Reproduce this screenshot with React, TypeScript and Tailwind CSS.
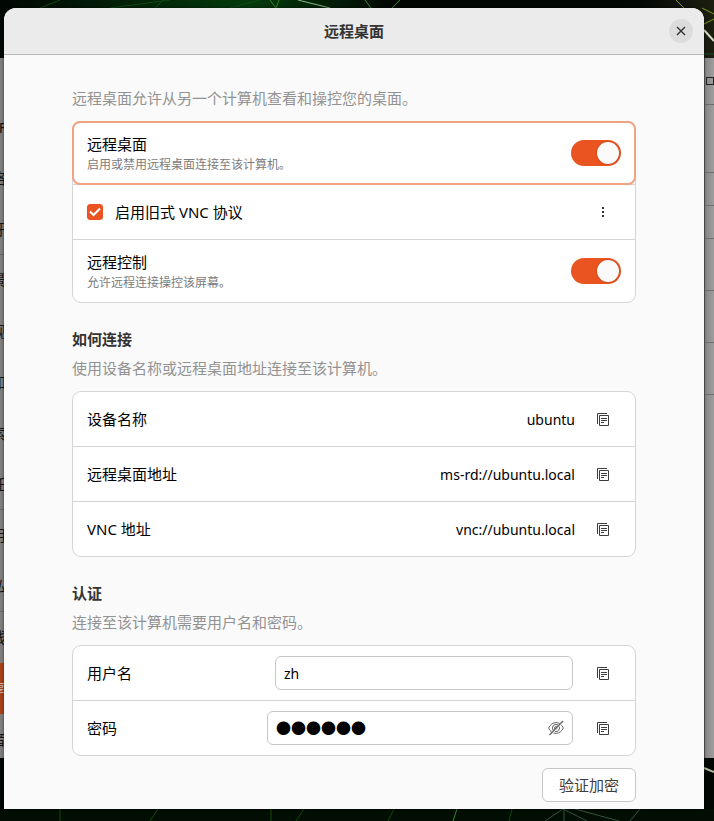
import { useState } from "react";
import type { ReactNode } from "react";

const sidebarItems = [
  { label: "Wi-Fi" },
  { label: "网络" },
  { label: "蓝牙", divider: true },
  { label: "背景" },
  { label: "外观" },
  { label: "通知" },
  { label: "搜索" },
  { label: "多任务", divider: true },
  { label: "应用程序" },
  { label: "隐私", divider: true },
  { label: "在线账户" },
  { label: "共享", active: true },
  { label: "声音" },
];

const panelRows = ["h-[68px]", "h-[33px]", "h-[33px]", "h-[52px]", "h-[52px]", "h-[52px]"];

function Wallpaper() {
  return (
    <svg
      className="absolute inset-0 h-full w-full"
      viewBox="0 0 714 821"
      preserveAspectRatio="none"
      aria-hidden="true"
    >
      <defs>
        <linearGradient id="glow" x1="0" x2="1" y1="0" y2="0">
          <stop offset="0" stopColor="#010702" />
          <stop offset="0.35" stopColor="#033a0c" />
          <stop offset="0.55" stopColor="#010702" />
          <stop offset="0.9" stopColor="#020803" />
          <stop offset="1" stopColor="#1c1e10" />
        </linearGradient>
      </defs>
      <rect width="714" height="821" fill="#010702" />
      <rect width="714" height="60" fill="url(#glow)" />
      <rect y="809" width="714" height="12" fill="#020d03" />
      <g fill="none" strokeWidth="1">
        <path d="M40 8 60 0M110 8l60-8M155 8l8-8M230 8l30-8" stroke="#0d4a14" />
        <path d="M270 0l6 8 3-8M365 0l6 8M392 8l8-8" stroke="#2f8a2b" />
        <path d="M298 0l32 8" stroke="#88b788" />
        <path d="M676 0l8 8M704 24l10-5M702 8l12 6" stroke="#7a9a22" />
        <path d="M704 30l10 11" stroke="#d5dcc4" strokeWidth="2" />
        <path d="M704 54h10" stroke="#1d4a2a" />
        <path d="M704 768l10 4" stroke="#a9b79c" strokeWidth="2" />
        <path d="M60 809v12M150 821l8-12M271 809v12M296 821l8-12M394 809l-6 12M512 809l-3 12" stroke="#104a0c" />
        <path d="M457 809l-4 12" stroke="#2c8a18" />
        <path d="M545 821l18-12 24 12M564 809v12M575 809l44 12M630 821l10-12" stroke="#33553a" />
      </g>
    </svg>
  );
}

function SettingsWindow() {
  return (
    <div className="absolute inset-x-0 top-[58px] bottom-[63px] flex justify-between overflow-hidden bg-[#8f8f8f]">
      <ul className="w-1 overflow-hidden bg-[#807e7c] pt-11 text-[15px] text-[#151515]">
        {sidebarItems.map((item) => (
          <li
            key={item.label}
            className={`flex h-[51px] items-center whitespace-nowrap ${
              item.active ? "bg-[#a84018] text-[#c9b3a9]" : ""
            } ${item.divider ? "border-b border-[#6b6967]" : ""}`}
          >
            <span className="-ml-6">{item.label}</span>
          </li>
        ))}
      </ul>
      <div className="w-[10px] border-l border-[#5a5a5a] bg-gradient-to-r from-[#868686] to-[#9e9e9e]">
        <div className="flex h-[47px] items-center justify-end border-b border-[#6c6c6c]">
          <span className="block size-2 border border-[#222]" />
        </div>
        {panelRows.map((height, i) => (
          <div key={i} className={`border-b border-[#707070] ${height}`} />
        ))}
      </div>
    </div>
  );
}

function CopyIcon() {
  return (
    <svg width="16" height="16" viewBox="0 0 16 16" fill="none" stroke="#3d3d3d" aria-hidden="true">
      <path d="M2.5 13V2.5H12M4.5 4.5h9v10h-9zM6 7.5h6M6 9.5h6M6 11.5h3" />
    </svg>
  );
}

function EyeOffIcon() {
  return (
    <svg width="16" height="16" viewBox="0 0 16 16" fill="none" stroke="#666" aria-hidden="true">
      <path d="M.6 8C2.2 4.6 4.8 2.6 8 2.6S13.8 4.6 15.4 8C13.8 11.400 11.200 13.400 8 13.400S2.200 11.400.6 8z" />
      <circle cx="8" cy="8" r="3.6" />
      <circle cx="8" cy="8" r="1.4" />
      <path d="M2 15.500 15.500 1.500" stroke="#fff" strokeWidth="1.200" />
      <path d="M1.500 15 15 1" strokeWidth="1.300" />
    </svg>
  );
}

function CopyButton({ label }: { label: string }) {
  return (
    <button type="button" aria-label={label} className="flex h-[34px] w-9 shrink-0 items-center justify-center">
      <CopyIcon />
    </button>
  );
}

function Card({ children }: { children: ReactNode }) {
  return (
    <div className="mt-[11px] divide-y divide-[#d5d5d5] rounded-[9px] border border-[#d5d5d5] bg-white">
      {children}
    </div>
  );
}

function SwitchRow({ id, title, text, focused }: { id: string; title: string; text: string; focused?: boolean }) {
  return (
    <div className="h-[63px] last:h-[62px]">
      <div
        className={`flex h-[62px] items-center justify-between px-[14px] ${
          focused ? "rounded-[7px] outline-2 -outline-offset-1 outline-[#f2a183]" : ""
        }`}
      >
        <label htmlFor={id} className="flex flex-col pt-0.5">
          <span className="text-[15px] leading-[22px] text-black">{title}</span>
          <span className="text-[12px] leading-5 text-[#7c7c7c]">{text}</span>
        </label>
        <input
          id={id}
          type="checkbox"
          role="switch"
          defaultChecked
          className="flex h-[26px] w-[50px] appearance-none items-center rounded-full bg-[#c8c8c8] px-0.5 before:size-[22px] before:rounded-full before:bg-[#fafafa] before:shadow-[0_0_2px_#b03a10] checked:justify-end checked:bg-[#e95420]"
        />
      </div>
    </div>
  );
}

function AddressRow({ label, value }: { label: string; value: string }) {
  return (
    <div className="flex h-[55px] items-center gap-[10px] px-[14px] text-black last:h-[54px]">
      <span className="flex-1 text-[15px]">{label}</span>
      <span className="text-[14px]">{value}</span>
      <CopyButton label={`复制${label}`} />
    </div>
  );
}

function Heading({ title, text }: { title: string; text: string }) {
  return (
    <div className="mt-6 flex flex-col gap-[5px]">
      <h2 className="text-[15px] leading-6 font-bold text-[#333]">{title}</h2>
      <p className="text-[15px] leading-6 text-[#929292]">{text}</p>
    </div>
  );
}

export default function App() {
  const [name, setName] = useState("zh");

  return (
    <div className="relative min-h-screen overflow-hidden bg-black pt-2 pr-[10px] pb-3 pl-1 font-['Noto_Sans','Noto_Sans_CJK_SC',sans-serif]">
      <Wallpaper />
      <SettingsWindow />
      <main className="relative rounded-t-xl bg-[#fafafa] pb-[7px] shadow-[0_0_3px_rgba(0,0,0,0.6)]">
        <header className="grid h-[47px] grid-cols-[1fr_auto_1fr] items-center rounded-t-xl border-b border-[#b8b8b8] bg-[#ebebeb] px-[11px]">
          <h1 className="col-start-2 text-[15px] font-bold text-[#333]">远程桌面</h1>
          <button
            type="button"
            aria-label="关闭"
            className="flex size-6 items-center justify-center justify-self-end rounded-full bg-[#dcdcdc]"
          >
            <svg width="10" height="10" viewBox="0 0 10 10" fill="none" stroke="#333" strokeWidth="1.400" aria-hidden="true">
              <path d="M1 1l8 8M9 1 1 9" />
            </svg>
          </button>
        </header>

        <div className="px-[68px] pt-[31px]">
          <p className="text-[15px] leading-6 text-[#929292]">远程桌面允许从另一个计算机查看和操控您的桌面。</p>
          <Card>
            <SwitchRow id="remote-desktop" title="远程桌面" text="启用或禁用远程桌面连接至该计算机。" focused />
            <div className="flex h-[55px] items-center justify-between px-[14px]">
              <label className="flex items-center gap-3 text-[15px] text-black">
                <span className="grid size-4">
                  <input
                    type="checkbox"
                    defaultChecked
                    className="peer col-start-1 row-start-1 size-4 appearance-none rounded-[3px] border border-[#c0c0c0] checked:border-[#e95420] checked:bg-[#e95420]"
                  />
                  <svg
                    className="pointer-events-none invisible col-start-1 row-start-1 peer-checked:visible"
                    width="16"
                    height="16"
                    viewBox="0 0 16 16"
                    fill="none"
                    stroke="#fff"
                    strokeWidth="2"
                    aria-hidden="true"
                  >
                    <path d="M3 7.500 6.500 11 13 4.500" />
                  </svg>
                </span>
                启用旧式 VNC 协议
              </label>
              <button type="button" aria-label="更多选项" className="flex h-[34px] w-9 items-center justify-center">
                <svg width="16" height="16" viewBox="0 0 16 16" fill="#333" aria-hidden="true">
                  <path d="M7 3h2v2H7zM7 7h2v2H7zM7 11h2v2H7z" />
                </svg>
              </button>
            </div>
            <SwitchRow id="remote-control" title="远程控制" text="允许远程连接操控该屏幕。" />
          </Card>

          <Heading title="如何连接" text="使用设备名称或远程桌面地址连接至该计算机。" />
          <Card>
            <AddressRow label="设备名称" value="ubuntu" />
            <AddressRow label="远程桌面地址" value="ms-rd://ubuntu.local" />
            <AddressRow label="VNC 地址" value="vnc://ubuntu.local" />
          </Card>

          <Heading title="认证" text="连接至该计算机需要用户名和密码。" />
          <Card>
            <div className="flex h-[55px] items-center gap-3 px-[14px] text-[15px] text-black">
              <label htmlFor="user" className="w-44 shrink-0">
                用户名
              </label>
              <input
                id="user"
                type="text"
                value={name}
                onChange={(e) => setName(e.target.value)}
                className="h-[34px] min-w-0 flex-1 rounded-md border border-[#c6c6c6] bg-white px-2 text-[14px]"
              />
              <CopyButton label="复制用户名" />
            </div>
            <div className="flex h-[54px] items-center gap-3 px-[14px] text-[15px] text-black">
              <label htmlFor="password" className="w-[168px] shrink-0">
                密码
              </label>
              <div className="flex h-[34px] min-w-0 flex-1 items-center rounded-md border border-[#c6c6c6] bg-white px-2">
                <input
                  id="password"
                  type="text"
                  defaultValue="●●●●●●"
                  className="min-w-0 flex-1 font-['Noto_Sans_CJK_SC',sans-serif] outline-none"
                />
                <button type="button" aria-label="显示密码">
                  <EyeOffIcon />
                </button>
              </div>
              <CopyButton label="复制密码" />
            </div>
          </Card>
          <div className="mt-3 flex justify-end">
            <button
              type="button"
              className="h-[34px] rounded-md border border-[#c6c6c6] bg-white px-4 text-[15px] text-[#3d3d3d]"
            >
              验证加密
            </button>
          </div>
        </div>
      </main>
    </div>
  );
}
